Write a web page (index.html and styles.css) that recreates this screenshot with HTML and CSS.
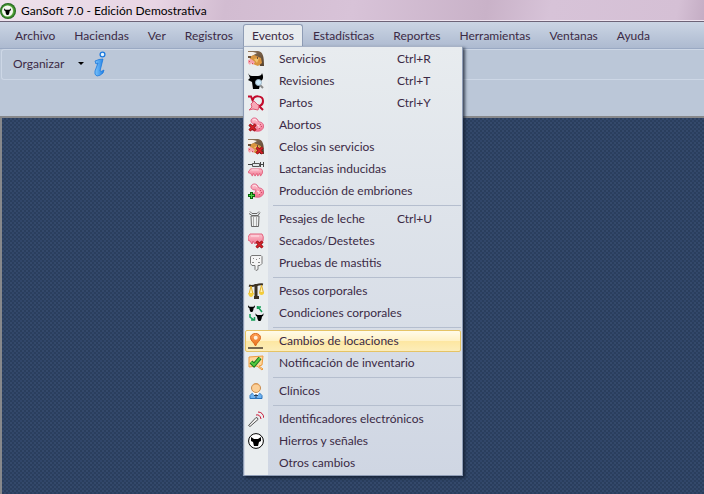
FILE: index.html
```html
<!DOCTYPE html>
<html lang="es">
<head>
<meta charset="utf-8">
<title>GanSoft 7.0 - Edición Demostrativa</title>
<link rel="stylesheet" href="styles.css">
</head>
<body>
<svg class="defs" aria-hidden="true">
  <defs>
    <linearGradient id="pink" x1="0" y1="0" x2="0" y2="1"><stop offset="0" stop-color="#fbc3cf"/><stop offset="1" stop-color="#f2708c"/></linearGradient>
    <linearGradient id="brown" x1="0" y1="0" x2="1" y2="1"><stop offset="0" stop-color="#94785c"/><stop offset="1" stop-color="#54402e"/></linearGradient>
    <linearGradient id="blue" x1="0" y1="0" x2="1" y2="0"><stop offset="0" stop-color="#7cc4fa"/><stop offset="1" stop-color="#1f7fe6"/></linearGradient>
    <linearGradient id="orange" x1="0" y1="0" x2="0" y2="1"><stop offset="0" stop-color="#ffa25a"/><stop offset="1" stop-color="#e8701c"/></linearGradient>
    <radialGradient id="green"><stop offset="0.6" stop-color="#6fbf4c"/><stop offset="1" stop-color="#155c14"/></radialGradient>
    <symbol id="cross" viewBox="0 0 9 9"><path d="M1.500 1.500l6 6M7.500 1.500l-6 6" stroke="#7d0c10" stroke-width="3"/><path d="M1.500 1.500l6 6M7.500 1.500l-6 6" stroke="#d9232a" stroke-width="1.700"/></symbol>
    <symbol id="cow" viewBox="0 0 16 16"><path d="M0 0h10c5 1 6 5 6 15h-4L9 7 0 5z" fill="url(#brown)"/><path d="M0 1h5l4 1-5 3H0z" fill="#f4efe8"/><path d="M1 6l5-2 7 3 1 5-4 3-5-2z" fill="#d9953f"/><path d="M6 8l5-1-2 5z" fill="#f3c56d"/><path d="M0 9l3-1 4 3-2 3-2-2-1 2-2-2z" fill="#f6a3ac"/><path d="M1 10h1v1H1zM4 12h1v1H4z" fill="#d8485c"/><path d="M0 5h3v2H0zM9 6h1v2H9z" fill="#6a503a"/></symbol>
    <symbol id="calf" viewBox="0 0 16 16"><path d="M3 4c0-3 4-4 6-2l2 3c3 0 5 2 4.500 5s-4 5-7.500 4c-3 0-5-1-5-3l4-1 1-3C5 7 3 6 3 4z" fill="url(#pink)" stroke="#e2688a"/><path d="M5 3q2-2 4 1M9 8q3 0 2 3" stroke="#ffe3e9" fill="none"/><path d="M12 7h1v1h-1zM13 9h1v1h-1zM11 11h1v1h-1z" fill="#d44a6b"/></symbol>
    <symbol id="bull" viewBox="0 0 16 16"><path d="M0 0c1 3 3 3 4 4h8c1-1 3-1 4-4 0 4 0 6-3 7l-1 5-2 4H6l-2-4-1-5C0 6 0 4 0 0z"/></symbol>
    <symbol id="udder" viewBox="0 0 16 10"><path d="M2 1h12q2 2 1 5l-2 3-1-3-2 3-1-3-2 3-2-3-1 3-2-3-3-1z" fill="url(#pink)" stroke="#e2607d"/><path d="M3 2h8" stroke="#ffe1e7"/></symbol>
  </defs>
</svg>

<header class="titlebar">
  <svg class="icon" viewBox="0 0 16 16" aria-hidden="true"><circle cx="8" cy="8" r="8" fill="url(#green)"/><circle cx="7.500" cy="8" r="5.500" fill="#f4f7f1"/><use href="#bull" x="4" y="5" width="7" height="7"/></svg>
  <h1>GanSoft 7.0 - Edición Demostrativa</h1>
</header>

<nav class="menubar" aria-label="Principal">
  <button type="button">Archivo</button>
  <button type="button">Haciendas</button>
  <button type="button">Ver</button>
  <button type="button">Registros</button>
  <div class="open">
    <button type="button" aria-expanded="true" aria-haspopup="menu">Eventos</button>
    <div class="menu" role="menu">
      <button type="button" role="menuitem"><svg class="icon" viewBox="0 0 16 16"><use href="#cow"/></svg><span>Servicios</span><kbd>Ctrl+R</kbd></button>
      <button type="button" role="menuitem"><svg class="icon" viewBox="0 0 16 16"><path d="M0 0c1 2 2 3 4 3h6c2 0 4-1 4-3 2 4 1 7-1 8l-2 8H5L4 9 0 7l2-2z"/><path d="M12 12l3 3" stroke="#888" stroke-width="2"/><circle cx="10.500" cy="9.500" r="3" fill="#cdeafa" stroke="#9db4c5"/></svg><span>Revisiones</span><kbd>Ctrl+T</kbd></button>
      <button type="button" role="menuitem"><svg class="icon" viewBox="0 0 16 16"><path d="M0 1.500h3l2 5M5 5c0-5 10-5 10 1 0 5-5 6-7 4M10 10l5 5" fill="none" stroke="#c20b2c" stroke-width="2"/><path d="M3 9l3-3 5 5-1 4-5-1-4 1 3-3z" fill="#f7a9b7" stroke="#df5874"/></svg><span>Partos</span><kbd>Ctrl+Y</kbd></button>
      <button type="button" role="menuitem"><svg class="icon" viewBox="0 0 16 16"><use href="#calf"/><use href="#cross" x="0" y="6" width="9" height="9"/></svg><span>Abortos</span></button>
      <button type="button" role="menuitem"><svg class="icon" viewBox="0 0 16 16"><use href="#cow"/><use href="#cross" x="7" y="7" width="9" height="9"/></svg><span>Celos sin servicios</span></button>
      <button type="button" role="menuitem"><svg class="icon" viewBox="0 0 16 16"><path d="M0 3.500h4M12 3.500h3M15.500 1v5M12.500 1v5" stroke="#444"/><path d="M4.500 2.500h7v3h-7z" fill="#dfe5e8" stroke="#555"/><path d="M6.500 0v2" stroke="#555"/><use href="#udder" x="0" y="7" width="16" height="9"/></svg><span>Lactancias inducidas</span></button>
      <button type="button" role="menuitem"><svg class="icon" viewBox="0 0 16 16"><use href="#calf"/><path d="M3.500 9v7M0 12.500h7" stroke="#0b6510" stroke-width="3"/><path d="M3.500 10v5M1 12.500h5" stroke="#4ed044"/></svg><span>Producción de embriones</span></button>
      <hr>
      <button type="button" role="menuitem"><svg class="icon" viewBox="0 0 16 16"><path d="M3 5h8l-.5 10.500h-7z" fill="#eef0f0" stroke="#666"/><path d="M5.500 6v9M8.500 6v9" stroke="#aaa"/><path d="M1 2.500l3 2h6l2-3M2 .5l2 2h5l2-2" fill="none" stroke="#666"/></svg><span>Pesajes de leche</span><kbd>Ctrl+U</kbd></button>
      <button type="button" role="menuitem"><svg class="icon" viewBox="0 0 16 16"><path d="M2 1h12q2 2 1 7l-3 4-3-4-2 3-2-3-1 3-2-3-2-1V4z" fill="url(#pink)" stroke="#e2607d"/><path d="M3 3h8" stroke="#ffe1e7"/><use href="#cross" x="7" y="7" width="9" height="9"/></svg><span>Secados/Destetes</span></button>
      <button type="button" role="menuitem"><svg class="icon" viewBox="0 0 16 16"><path d="M4 .5h9l1 1v7l-2 2h-2v4l-2 1-1-1v-4H4l-1.500-2v-7z" fill="#f5f5f5" stroke="#777"/><path d="M5 3h1v1H5zM11 3h1v1h-1zM4 7h2v1H4zM10 7h2v1h-2zM8 4h1v1H8z" fill="#888"/></svg><span>Pruebas de mastitis</span></button>
      <hr>
      <button type="button" role="menuitem"><svg class="icon" viewBox="0 0 16 16"><path d="M1 2.500c5 2 8-2 14-1" fill="none" stroke="#3b3123" stroke-width="2"/><path d="M8 1v12M6 14.500h5" stroke="#3b3123" stroke-width="3"/><path d="M3 3l-2 8h4zM13.500 2l-2 8h4z" fill="#fff1b3" stroke="#e0ad22"/><path d="M0 10h6q-1 4-3 4t-3-4zM11 9h5q0 3-2.500 3T11 9z" fill="#f4cd39"/></svg><span>Pesos corporales</span></button>
      <button type="button" role="menuitem"><svg class="icon" viewBox="0 0 16 16"><use href="#bull" x="0" y="0" width="7" height="7"/><use href="#bull" x="7" y="8" width="9" height="8"/><path d="M9 2h4M9.500 1v3M10 2l4 5M2 9v3l4 3M6.500 12v3H3" fill="none" stroke="#18a05a" stroke-width="1.500"/></svg><span>Condiciones corporales</span></button>
      <hr>
      <button type="button" role="menuitem" class="active"><svg class="icon" viewBox="0 0 16 16"><path d="M7.500 13C6 9 2.500 8 2.500 4.500a5 4 0 0 1 10 0C12.500 8 9 9 7.500 13z" fill="url(#orange)" stroke="#d9661a"/><circle cx="7.700" cy="4.700" r="2" fill="#fff1dc"/><path d="M0 15h15" stroke="#4a3c30" stroke-width="1.500"/></svg><span>Cambios de locaciones</span></button>
      <button type="button" role="menuitem"><svg class="icon" viewBox="0 0 16 16"><path d="M1 2l14-1-1 9-3 1 4 3-1 1-5-4-8 1z" fill="#ffd69a" stroke="#ed9b3e"/><path d="M3 7l3 3 6-7" fill="none" stroke="#187522" stroke-width="4"/><path d="M3 7l3 3 6-7" fill="none" stroke="#53cb3e" stroke-width="2"/></svg><span>Notificación de inventario</span></button>
      <hr>
      <button type="button" role="menuitem"><svg class="icon" viewBox="0 0 16 16"><path d="M2 15.500v-3l3-3h6l3 3v3z" fill="#6db2f1" stroke="#2d75bd"/><path d="M4 9l4 5 4-5z" fill="#fff"/><path d="M8 11v4M6 12.500h4" stroke="#263e5c"/><circle cx="8" cy="5" r="4.500" fill="#fbcf97" stroke="#c98a4c"/><path d="M4 3q4-4 8 0" fill="none" stroke="#e5a663"/></svg><span>Clínicos</span></button>
      <hr>
      <button type="button" role="menuitem"><svg class="icon" viewBox="0 0 16 16"><path d="M.5 14.500L8 6.500q2 0 2 2L2 15.500z" fill="#eee" stroke="#555"/><path d="M8 4q4-1 5 4M10 1q5 0 6 6" fill="none" stroke="#c91837"/></svg><span>Identificadores electrónicos</span></button>
      <button type="button" role="menuitem"><svg class="icon" viewBox="0 0 16 16"><circle cx="8" cy="8" r="7.400" fill="#fff" stroke="#000"/><path d="M3 4l3 2h4l3-2v4l-2 1-1 4H6L5 9 3 8z"/></svg><span>Hierros y señales</span></button>
      <button type="button" role="menuitem"><span>Otros cambios</span></button>
    </div>
  </div>
  <button type="button">Estadísticas</button>
  <button type="button">Reportes</button>
  <button type="button">Herramientas</button>
  <button type="button">Ventanas</button>
  <button type="button">Ayuda</button>
</nav>

<div class="toolbar">
  <button type="button" class="organize">Organizar<span class="caret"></span></button>
  <button type="button" class="info" aria-label="Información"><svg viewBox="0 0 14 26" aria-hidden="true"><circle cx="9.500" cy="3.500" r="2.400" fill="#e6f4ff" stroke="#1a78dd" stroke-width="1.300"/><path d="M2 10q4-2 8-2L7 20q1 1 4-1l-1 3q-3 3-6 3-3-1-2-5l3-8-2 1z" fill="url(#blue)" stroke="#1a78dd" stroke-width=".8"/></svg></button>
</div>
<div class="tray"></div>
<main class="workspace"></main>
</body>
</html>
```
FILE: styles.css
```css
* { box-sizing: border-box; }

body {
  margin: 0;
  min-height: 100vh;
  display: flex;
  flex-direction: column;
  background: #bbc7d8;
  color: #3b2a45;
  font: 12px/16px Lato, "Noto Sans", sans-serif;
}

button {
  margin: 0;
  padding: 0;
  border: 0;
  background: none;
  color: inherit;
  font: inherit;
  white-space: nowrap;
}

.defs { position: absolute; width: 0; height: 0; }

.icon { width: 16px; height: 16px; flex: none; }

.titlebar {
  display: flex;
  align-items: center;
  gap: 5px;
  height: 22px;
  border-bottom: 1px solid #6d6377;
  background: linear-gradient(100deg, #ede0eb 0%, #e8d5e4 22%, #d2bcd1 32%, #d8c3d8 50%, #c9b2c8 69%, #d7c3d8 78%, #d5c0d5 96%, #c4adc4 100%);
  box-shadow: inset 0 -1px #eee3ef;
}

.titlebar h1 {
  margin: 0;
  color: #000;
  font-size: 12px;
  font-weight: 400;
}

.menubar {
  display: flex;
  align-items: flex-end;
  gap: 1px;
  height: 27px;
  padding: 0 6px 1px;
  border-bottom: 1px solid #9aa9c3;
  background: linear-gradient(#cbd5e4, #adbad0);
}

.menubar > button,
.open > button { height: 23px; padding: 0 9px; }

.open { position: relative; }

.open > button {
  display: block;
  border: 1px solid #8e9cb5;
  border-bottom: 0;
  border-radius: 3px 3px 0 0;
  padding: 0 8px;
  background: #e8ecef;
}

.menu {
  position: absolute;
  top: 22px;
  left: 0;
  z-index: 1;
  width: 220px;
  padding: 1px;
  border: 1px solid #8e9cb5;
  border-top-color: #a7b2c6;
  background:
    linear-gradient(#e9edef, #e9edef) 1px 0 / 23px 100% no-repeat,
    linear-gradient(#e8ecef, #cfd6e3);
  box-shadow: 2px 2px 3px #101a2cc0;
}

.menu button {
  display: flex;
  align-items: center;
  gap: 15px;
  width: 100%;
  height: 22px;
  padding: 0 2px;
  border: 1px solid transparent;
  border-radius: 2px;
  text-align: left;
}

.menu span { flex: 1; }
.menu span:first-child { padding-left: 31px; }
.menu kbd { width: 61px; font: inherit; }

.menu .active {
  border-color: #e5c365;
  background: linear-gradient(#fffbea, #fff1c4 50%, #fde7a2 52%, #fcedb9);
}

.menu hr {
  height: 1px;
  margin: 3px 0 2px 28px;
  border: 0;
  background: #b5bece;
}

.toolbar {
  display: flex;
  align-items: center;
  gap: 9px;
  height: 31px;
  margin-left: 1px;
  padding: 0 0 2px 11px;
  border: 1px solid #cdd7e6;
  border-right: 0;
  border-radius: 3px 0 0 3px;
}

.organize { display: flex; align-items: center; gap: 14px; }

.caret {
  border: 3px solid transparent;
  border-top-color: #000;
  border-bottom: 0;
}

.info svg { display: block; width: 14px; height: 26px; }

.tray {
  height: 38px;
  border-bottom: 2px solid #87888b;
}

.workspace {
  flex: 1;
  border-left: 2px solid #87888b;
  background:
    radial-gradient(circle at 1px 1px, #34496b 1px, transparent 1px) 0 0 / 4px 4px,
    radial-gradient(circle at 3px 3px, #314669 1px, transparent 1px) 0 0 / 4px 4px,
    #2a3e5d;
}
```
